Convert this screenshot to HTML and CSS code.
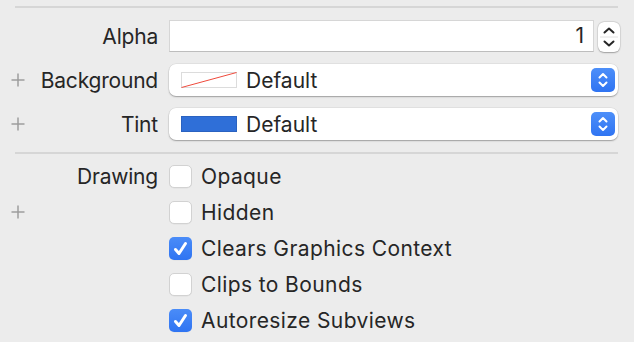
FILE: index.html
```html
<!DOCTYPE html>
<html lang="en">
<head>
    <meta charset="UTF-8">
    <title>View Inspector</title>
    <link rel="stylesheet" href="styles.css">
</head>
<body>
    <div class="inspector">
        <div class="separator"></div>

        <div class="row field-row alpha-row">
            <span class="add"></span>
            <label class="label">Alpha</label>
            <div class="control">
                <div class="text-field">1</div>
                <div class="stepper">
                    <svg width="22" height="30" viewBox="0 0 22 30">
                        <path d="M6.5 10.5 L11 6.5 L15.5 10.5" fill="none" stroke="#262626" stroke-width="2" stroke-linecap="round" stroke-linejoin="round"/>
                        <line x1="2" y1="15" x2="20" y2="15" stroke="#e2e2e2" stroke-width="1"/>
                        <path d="M6.5 19.5 L11 23.5 L15.5 19.5" fill="none" stroke="#262626" stroke-width="2" stroke-linecap="round" stroke-linejoin="round"/>
                    </svg>
                </div>
            </div>
        </div>

        <div class="row field-row">
            <span class="add">
                <svg width="14" height="14" viewBox="0 0 14 14"><path d="M7 0.5 V13.5 M0.5 7 H13.5" stroke="#9d9d9d" stroke-width="1.5"/></svg>
            </span>
            <label class="label">Background</label>
            <div class="popup">
                <svg class="swatch" width="56" height="16" viewBox="0 0 56 16">
                    <rect x="0.5" y="0.5" width="55" height="15" fill="#fff" stroke="#dcdcdc"/>
                    <line x1="0.5" y1="15.5" x2="55.5" y2="0.5" stroke="#ef4a3c" stroke-width="1"/>
                </svg>
                <span class="popup-text">Default</span>
                <span class="popup-arrows">
                    <svg width="24" height="24" viewBox="0 0 24 24">
                        <path d="M8.5 9.5 L12 6 L15.5 9.5 M8.5 14.5 L12 18 L15.5 14.5" fill="none" stroke="#fff" stroke-width="2" stroke-linecap="round" stroke-linejoin="round"/>
                    </svg>
                </span>
            </div>
        </div>

        <div class="row field-row">
            <span class="add">
                <svg width="14" height="14" viewBox="0 0 14 14"><path d="M7 0.5 V13.5 M0.5 7 H13.5" stroke="#9d9d9d" stroke-width="1.5"/></svg>
            </span>
            <label class="label">Tint</label>
            <div class="popup">
                <svg class="swatch" width="56" height="16" viewBox="0 0 56 16">
                    <rect x="0.5" y="0.5" width="55" height="15" fill="#2f6fd8" stroke="#2a62c0"/>
                </svg>
                <span class="popup-text">Default</span>
                <span class="popup-arrows">
                    <svg width="24" height="24" viewBox="0 0 24 24">
                        <path d="M8.5 9.5 L12 6 L15.5 9.5 M8.5 14.5 L12 18 L15.5 14.5" fill="none" stroke="#fff" stroke-width="2" stroke-linecap="round" stroke-linejoin="round"/>
                    </svg>
                </span>
            </div>
        </div>

        <div class="separator"></div>

        <div class="row check-row">
            <span class="add"></span>
            <label class="label">Drawing</label>
            <label class="check"><span class="box"></span>Opaque</label>
        </div>
        <div class="row check-row">
            <span class="add">
                <svg width="14" height="14" viewBox="0 0 14 14"><path d="M7 0.5 V13.5 M0.5 7 H13.5" stroke="#9d9d9d" stroke-width="1.5"/></svg>
            </span>
            <span class="label"></span>
            <label class="check"><span class="box"></span>Hidden</label>
        </div>
        <div class="row check-row">
            <span class="add"></span>
            <span class="label"></span>
            <label class="check">
                <span class="box checked">
                    <svg width="23" height="23" viewBox="0 0 23 23"><path d="M6.5 12.5 L10 16.5 L16.5 6.5" fill="none" stroke="#fff" stroke-width="3" stroke-linecap="round" stroke-linejoin="round"/></svg>
                </span>Clears Graphics Context
            </label>
        </div>
        <div class="row check-row">
            <span class="add"></span>
            <span class="label"></span>
            <label class="check"><span class="box"></span>Clips to Bounds</label>
        </div>
        <div class="row check-row">
            <span class="add"></span>
            <span class="label"></span>
            <label class="check">
                <span class="box checked">
                    <svg width="23" height="23" viewBox="0 0 23 23"><path d="M6.5 12.5 L10 16.5 L16.5 6.5" fill="none" stroke="#fff" stroke-width="3" stroke-linecap="round" stroke-linejoin="round"/></svg>
                </span>Autoresize Subviews
            </label>
        </div>
    </div>
</body>
</html>
```

FILE: styles.css
```css
body {
    margin: 0;
    background-color: #ececec;
    color: #262626;
    font-family: Inter, "Noto Sans", sans-serif;
    font-size: 21px;
}

.inspector {
    padding-top: 6px;
}

.separator {
    height: 2px;
    margin: 0 16px 12px 15px;
    background-color: #d6d6d6;
}

.row {
    display: grid;
    grid-template-columns: 36px 111px 1fr;
    column-gap: 11px;
    align-items: center;
    padding-right: 16px;
}

.field-row {
    height: 32px;
    margin-bottom: 12px;
}

.check-row {
    height: 36px;
}

.inspector .separator + .check-row {
    margin-top: -8px;
}

.add {
    display: flex;
    justify-content: center;
    align-items: center;
}

.label {
    justify-self: end;
    white-space: nowrap;
    letter-spacing: -0.2px;
}

/* Alpha field with stepper */
.alpha-row {
    padding-right: 14px;
}

.control {
    display: flex;
    align-items: center;
    gap: 4px;
    height: 32px;
}

.text-field {
    flex: 1;
    height: 32px;
    box-sizing: border-box;
    background-color: #fff;
    border: 1px solid #d6d6d6;
    border-bottom-color: #bdbdbd;
    text-align: right;
    padding-right: 9px;
    line-height: 30px;
}

.stepper {
    width: 22px;
    height: 30px;
    margin-top: 2px;
    background-color: #fff;
    border-radius: 6px;
    box-shadow: 0 0.5px 1.5px rgba(0, 0, 0, 0.3), 0 0 0 0.5px rgba(0, 0, 0, 0.08);
}

.stepper svg {
    display: block;
}

/* Popup buttons */
.popup {
    display: flex;
    align-items: center;
    height: 32px;
    padding: 0 3px 0 12px;
    background-color: #fff;
    border-radius: 7px;
    box-shadow: 0 1px 1.5px rgba(0, 0, 0, 0.3), 0 0 0 0.5px rgba(0, 0, 0, 0.08);
}

.swatch {
    display: block;
    flex-shrink: 0;
}

.popup-text {
    flex: 1;
    margin-left: 9px;
}

.popup-arrows {
    width: 24px;
    height: 24px;
    border-radius: 5px;
    background: linear-gradient(#4d8ff9, #2f74f2);
}

.popup-arrows svg {
    display: block;
}

/* Checkboxes */
.check {
    display: flex;
    align-items: center;
    gap: 9px;
    letter-spacing: 0.4px;
}

.box {
    width: 23px;
    height: 23px;
    box-sizing: border-box;
    border-radius: 5px;
    background-color: #fff;
    border: 1px solid #d2d2d2;
    box-shadow: 0 0.5px 0.5px rgba(0, 0, 0, 0.06);
}

.box.checked {
    border: none;
    background: linear-gradient(#4a8cf8, #2f74f2);
}

.box svg {
    display: block;
}
```
